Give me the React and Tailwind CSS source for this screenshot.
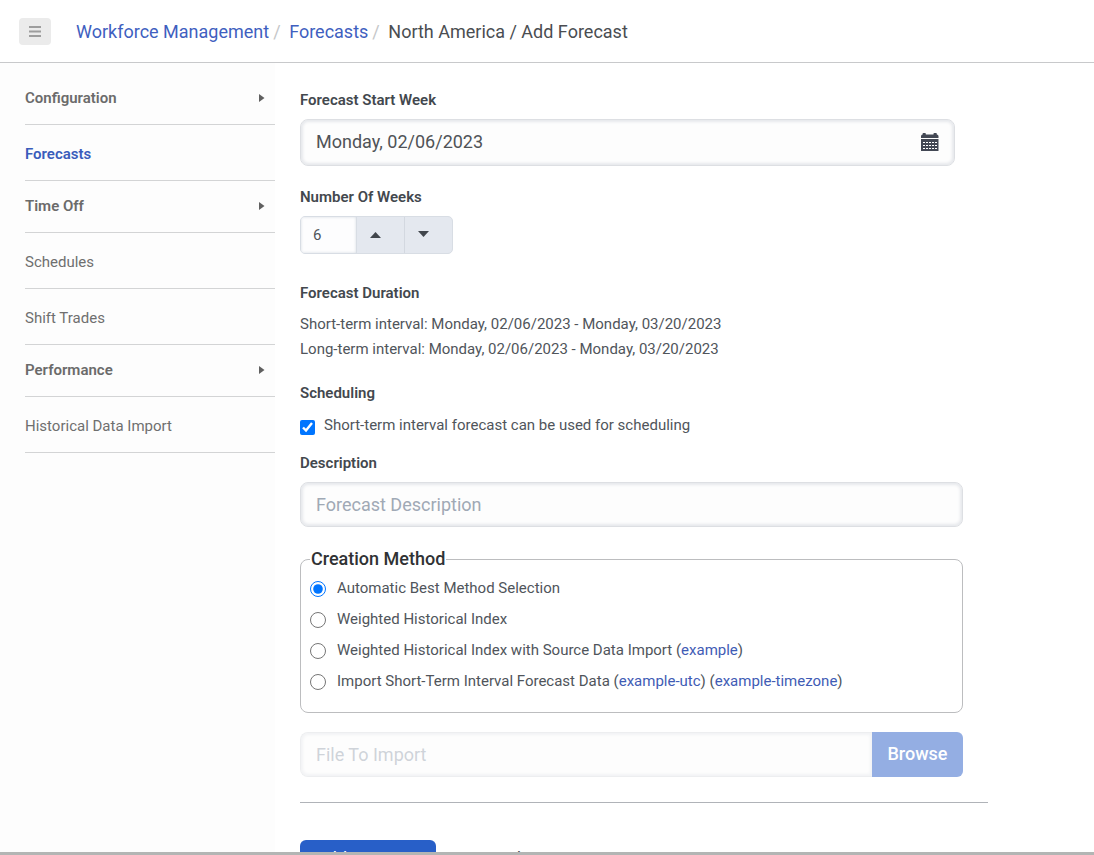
import { useState } from "react";

const navItems = [
  { label: "Configuration", group: true },
  { label: "Forecasts", active: true },
  { label: "Time Off", group: true },
  { label: "Schedules" },
  { label: "Shift Trades" },
  { label: "Performance", group: true },
  { label: "Historical Data Import" },
];

const methods = [
  { id: "automatic", label: "Automatic Best Method Selection", links: [] },
  { id: "weighted", label: "Weighted Historical Index", links: [] },
  { id: "weighted-import", label: "Weighted Historical Index with Source Data Import", links: ["example"] },
  { id: "short-term-import", label: "Import Short-Term Interval Forecast Data", links: ["example-utc", "example-timezone"] },
];

const field =
  "w-full rounded-lg border border-[#dddfe3] bg-[#fdfdfd] px-[15px] text-lg text-[#505357] shadow-[inset_0_0_3px_2px_#e6e8ec] placeholder:text-[#a0a9b5] outline-none";

function CalendarIcon() {
  const cols = [2, 5, 8, 11, 14];
  const rows = [9, 12, 15];
  return (
    <svg width="18" height="18" viewBox="0 0 18 18" aria-hidden="true">
      <path d="M0 5V3.2Q0 1.5 1.6 1.5V.8Q1.6 0 2.4 0H4Q4.800 0 4.800 .8V1.500H12.500V.8Q12.500 0 13.300 0H15Q15.800 0 15.800 .8V1.500Q17.500 1.500 17.500 3.200V5Z" fill="#434854" />
      <path d="M0 6H17.500V18H0Z" fill="#434854" />
      {rows.map((y) => cols.map((x) => <rect key={`${x}-${y}`} x={x} y={y} width="2" height="1" fill="#fff" />))}
    </svg>
  );
}

function Label({ htmlFor, children }) {
  return (
    <label htmlFor={htmlFor} className="block text-[15px] leading-5 font-semibold text-[#43484e]">
      {children}
    </label>
  );
}

function Sidebar() {
  return (
    <nav aria-label="Sections" className="w-[275px] shrink-0 bg-[#fdfdfd] pt-2.5 pl-[25px]">
      <ul>
        {navItems.map(({ label, group, active }) => (
          <li key={label} className="border-b border-[#d3d4d5] text-[15px] leading-5">
            {group ? (
              <button type="button" className="flex w-full items-center justify-between pt-[15px] pr-2.5 pb-4 font-semibold text-[#6b6b6b]">
                {label}
                <svg width="6" height="8" viewBox="0 0 6 8" aria-hidden="true">
                  <path d="M0 0 5.500 4 0 8Z" fill="#606060" />
                </svg>
              </button>
            ) : (
              <a href="#" className={active ? "block pt-[19px] pb-4 font-semibold text-[#3a5cbb]" : "block pt-[19px] pb-4 text-[#6f6f6f]"}>
                {label}
              </a>
            )}
          </li>
        ))}
      </ul>
    </nav>
  );
}

export default function App() {
  const [weeks, setWeeks] = useState(6);
  const [method, setMethod] = useState("automatic");
  return (
    <div className="flex h-screen flex-col overflow-hidden border-b-3 border-[#b3b5b4] bg-white font-[Roboto,'Liberation_Sans',sans-serif] text-[15px] text-[#50555b]">
      <header className="flex h-[63px] shrink-0 items-center border-b border-[#c8c9cb] pl-[19px]">
        <button type="button" aria-label="Toggle menu" className="flex h-[27px] w-8 items-center justify-center rounded-sm bg-[#ebebeb]">
          <svg width="12" height="11" viewBox="0 0 12 11" aria-hidden="true">
            <path d="M0 1H12M0 5.500H12M0 10H12" stroke="#9d9d9d" strokeWidth="2" />
          </svg>
        </button>
        <nav aria-label="Breadcrumb" className="pt-0.5 pl-[25px] text-lg">
          <ol className="flex items-center">
            <li><a href="#" className="text-[#3f5fc0]">Workforce Management</a></li>
            <li aria-hidden="true" className="w-5 pl-1 text-[#c5c7c9]">/</li>
            <li><a href="#" className="text-[#3f5fc0]">Forecasts</a></li>
            <li aria-hidden="true" className="w-5 pl-1 text-[#c5c7c9]">/</li>
            <li aria-current="page" className="text-[#4a4d51]">North America / Add Forecast</li>
          </ol>
        </nav>
      </header>

      <div className="flex min-h-0 flex-1 overflow-y-auto [scrollbar-width:none]">
        <Sidebar />
        <main className="min-w-0 flex-1 pt-[27px] pr-[106px] pl-[25px]">
          <form className="flex flex-col" onSubmit={(e) => e.preventDefault()}>
            <div className="mr-[25px]">
              <div className="mr-2">
                <Label htmlFor="start">Forecast Start Week</Label>
                <div className="relative mt-[9px]">
                  <input id="start" type="text" defaultValue="Monday, 02/06/2023" className={`${field} block h-[47px] pb-0.5`} />
                  <button type="button" aria-label="Choose date" className="absolute top-3.5 right-4">
                    <CalendarIcon />
                  </button>
                </div>
              </div>

              <div className="mt-[21px]">
                <Label htmlFor="weeks">Number Of Weeks</Label>
                <div className="mt-[9px] flex h-[38px] w-[153px] overflow-hidden rounded-[5px] border border-[#d8dde4] bg-[#e4e8ef]">
                  <input
                    id="weeks"
                    type="text"
                    inputMode="numeric"
                    value={weeks}
                    onChange={(e) => setWeeks(Number(e.target.value) || 0)}
                    className="w-14 border-r border-[#d8dde4] bg-[#fdfdfe] pl-3 shadow-[inset_0_0_3px_#d5dae2] outline-none"
                  />
                  <button type="button" aria-label="Increase" onClick={() => setWeeks(weeks + 1)} className="flex w-12 items-center border-r border-[#d3d8e0] pl-[13px]">
                    <svg width="11" height="6" viewBox="0 0 11 6" aria-hidden="true"><path d="M0 6 5.500 0 11 6Z" fill="#41464c" /></svg>
                  </button>
                  <button type="button" aria-label="Decrease" onClick={() => setWeeks(weeks - 1)} className="flex flex-1 items-center pb-0.5 pl-[13px]">
                    <svg width="11" height="6" viewBox="0 0 11 6" aria-hidden="true"><path d="M0 0 5.500 6 11 0Z" fill="#41464c" /></svg>
                  </button>
                </div>
              </div>

              <section className="mt-[29px]">
                <h2 className="leading-5 font-semibold text-[#43484e]">Forecast Duration</h2>
                <div className="mt-[9px] leading-[25px]">
                  <p>Short-term interval: Monday, 02/06/2023 - Monday, 03/20/2023</p>
                  <p>Long-term interval: Monday, 02/06/2023 - Monday, 03/20/2023</p>
                </div>
              </section>

              <section className="mt-[21px]">
                <h2 className="leading-5 font-semibold text-[#43484e]">Scheduling</h2>
                <div className="mt-3 flex items-start gap-[9px] leading-5">
                  <input id="scheduling" type="checkbox" defaultChecked className="mt-[5px] size-[15px]" />
                  <label htmlFor="scheduling">Short-term interval forecast can be used for scheduling</label>
                </div>
              </section>

              <div className="mt-[18px]">
                <Label htmlFor="description">Description</Label>
                <input id="description" type="text" placeholder="Forecast Description" className={`${field} mt-[9px] block h-[45px]`} />
              </div>

              <fieldset className="mt-5 rounded-lg border border-[#bcbdbf] px-[9px] pb-[15px]">
                <legend className="px-px text-lg leading-6 font-medium text-[#303234]">Creation Method</legend>
                <div className="pt-0.5">
                  {methods.map(({ id, label, links }) => (
                    <div key={id} className="flex h-[31px] items-center gap-[11px]">
                      <input id={id} type="radio" name="method" checked={method === id} onChange={() => setMethod(id)} className="size-4" />
                      <p>
                        <label htmlFor={id}>{label}</label>
                        {links.map((text) => (
                          <span key={text}> (<a href="#" className="text-[#3f5cb5]">{text}</a>)</span>
                        ))}
                      </p>
                    </div>
                  ))}
                </div>
              </fieldset>

              <div className="mt-[19px] flex h-[45px] opacity-50">
                <input type="text" disabled aria-label="File To Import" placeholder="File To Import" className={`${field} min-w-0 flex-1 rounded-r-none border-r-0`} />
                <button type="button" disabled className="w-[91px] rounded-r-md bg-[#2b5fc9] pb-0.5 text-lg font-medium text-white">Browse</button>
              </div>
            </div>

            <hr className="mt-[25px] border-[#b0b3b8]" />
            <div className="mt-[37px] flex gap-3.5 pb-6 text-lg">
              <button type="submit" className="h-10 rounded-md bg-[#285fc8] px-[15px] pb-0.5 text-white">Add Forecast</button>
              <button type="button" className="h-10 px-4 pb-0.5">Cancel</button>
            </div>
          </form>
        </main>
      </div>
    </div>
  );
}
